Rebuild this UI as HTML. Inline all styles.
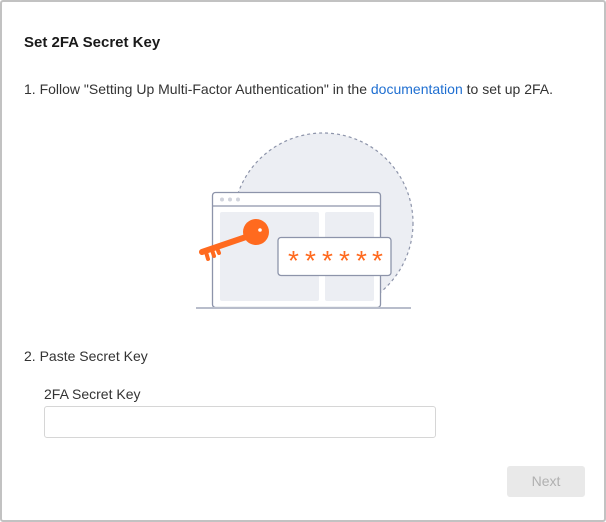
<!DOCTYPE html>
<html><head><style>
*{box-sizing:border-box;margin:0;padding:0}
body{width:606px;height:522px;background:#fff;font-family:"Liberation Sans",sans-serif;color:#222;position:relative;overflow:hidden}
.frame{position:absolute;left:0;top:0;width:606px;height:522px;border:2px solid #c2c2c2;border-radius:3px}
.t{position:absolute;white-space:nowrap}
</style></head><body>
<div class="frame"></div>
<div class="t" style="left:24px;top:34px;font-size:15px;font-weight:bold;color:#1a1a1a">Set 2FA Secret Key</div>
<div class="t" style="left:24px;top:81px;font-size:14px;color:#333">1. Follow "Setting Up Multi-Factor Authentication" in the <span style="color:#1f6fd1">documentation</span> to set up 2FA.</div>
<svg style="position:absolute;left:0;top:0" width="606" height="522">
<defs><clipPath id="c"><rect x="0" y="0" width="606" height="307"/></clipPath></defs>
<circle cx="323" cy="223" r="90" fill="#eceef3" stroke="#8d94aa" stroke-dasharray="3,3" stroke-width="1.2" clip-path="url(#c)"/>
<rect x="212.5" y="192.5" width="168" height="115" rx="3" fill="#fff" stroke="#8d94aa" stroke-width="1.3"/>
<line x1="213" y1="206" x2="380" y2="206" stroke="#8d94aa" stroke-width="1.2"/>
<circle cx="222" cy="199.5" r="2" fill="#d0d3dc"/><circle cx="230" cy="199.5" r="2" fill="#d0d3dc"/><circle cx="238" cy="199.5" r="2" fill="#d0d3dc"/>
<rect x="220" y="212" width="99" height="89" rx="2" fill="#eceef3"/>
<rect x="325" y="212" width="49" height="89" rx="2" fill="#eceef3"/>
<line x1="196" y1="308" x2="411" y2="308" stroke="#b8bdcb" stroke-width="2"/>
<path d="M246 237 L202 252" stroke="#ff6a1f" stroke-width="6" stroke-linecap="round"/>
<path d="M206 252 l2 7 M212 250 l2 6 M217 248 l2 5" stroke="#ff6a1f" stroke-width="4" stroke-linecap="round"/>
<circle cx="256" cy="232" r="13" fill="#ff6a1f"/>
<circle cx="260" cy="230" r="1.8" fill="#fff"/>
<rect x="278" y="237.5" width="113" height="38" rx="3" fill="#fff" stroke="#8d94aa" stroke-width="1.3"/>
<g font-size="28" fill="#ff6a1f" text-anchor="start" font-family="Liberation Sans">
<text x="288" y="270">*</text><text x="305" y="270">*</text><text x="322" y="270">*</text><text x="339" y="270">*</text><text x="356" y="270">*</text><text x="372" y="270">*</text>
</g>
</svg>
<div class="t" style="left:24px;top:348px;font-size:14px;color:#333">2. Paste Secret Key</div>
<div class="t" style="left:44px;top:386px;font-size:14px;color:#333">2FA Secret Key</div>
<div style="position:absolute;left:44px;top:406px;width:392px;height:32px;border:1px solid #d6d6d6;border-radius:3px"></div>
<div style="position:absolute;left:507px;top:466px;width:78px;height:31px;background:#e9e9e9;border-radius:3px;color:#b0b0b0;font-size:14px;text-align:center;line-height:31px">Next</div>
</body></html>
